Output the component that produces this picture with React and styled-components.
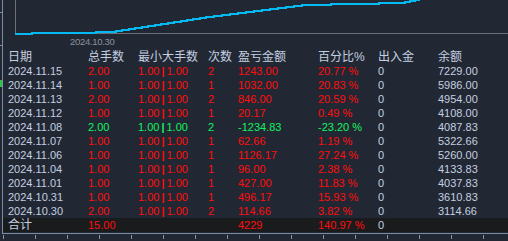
import React from 'react';
import styled, { createGlobalStyle } from 'styled-components';

const GlobalStyle = createGlobalStyle`
    body {
        margin: 0;
        background: #222833;
        font-family: "Liberation Sans", "Noto Sans CJK SC", sans-serif;
    }
`

const rows = [
    ['2024.11.15', '2.00', '2', '1243.00', '20.77 %', '7229.00', 'up'],
    ['2024.11.14', '1.00', '1', '1032.00', '20.83 %', '5986.00', 'up'],
    ['2024.11.13', '2.00', '2', '846.00', '20.59 %', '4954.00', 'up'],
    ['2024.11.12', '1.00', '1', '20.17', '0.49 %', '4108.00', 'up'],
    ['2024.11.08', '2.00', '2', '-1234.83', '-23.20 %', '4087.83', 'down'],
    ['2024.11.07', '1.00', '1', '62.66', '1.19 %', '5322.66', 'up'],
    ['2024.11.06', '1.00', '1', '1126.17', '27.24 %', '5260.00', 'up'],
    ['2024.11.04', '1.00', '1', '96.00', '2.38 %', '4133.83', 'up'],
    ['2024.11.01', '1.00', '1', '427.00', '11.83 %', '4037.83', 'up'],
    ['2024.10.31', '1.00', '1', '496.17', '15.93 %', '3610.83', 'up'],
    ['2024.10.30', '2.00', '2', '114.66', '3.82 %', '3114.66', 'up'],
];

const headers = ['日期', '总手数', '最小大手数', '次数', '盈亏金额', '百分比%', '出入金', '余额'];

// equity curve steps: [x where the line drops a pixel, top y]
const steps = [
    [15, 33], [32, 32], [96, 31], [116, 30], [122, 29], [129, 28], [135, 27], [142, 26],
    [148, 25], [155, 24], [161, 23], [168, 22], [174, 21], [181, 20], [187, 19], [193, 18],
    [200, 17], [206, 16], [214, 15], [222, 14], [230, 13], [238, 12], [246, 11], [254, 10],
    [262, 9], [270, 8], [278, 7], [286, 6], [294, 5], [302, 4], [331, 3], [379, 2],
    [405, 1], [410, 0], [415, -1],
];

const curve = steps.reduce((d, [x, y], i) => {
    const cy = y + 1;
    if (i === 0) return `M${x} ${cy}`;
    return `${d} H${x} V${cy}`;
}, '') + ' H420';

const App = () => {
    return (
        <Page>
            <GlobalStyle />
            <Frame>
                <Tick top={12} />
                <Tick top={45} />
                <Marker />
                <Chart viewBox="3 0 505 50" width="505" height="50">
                    <path d="M15.5 0 V33.5 H508" fill="none" stroke="#6c6f76" strokeWidth="1" />
                    <path d={curve} fill="none" stroke="#05b9f2" strokeWidth="2" />
                    <text x="70" y="44.5" fill="#8a929e" fontSize="9.5" fontFamily="Liberation Sans, sans-serif" letterSpacing="-0.3">2024.10.30</text>
                </Chart>
                <Table>
                    <Row>
                        {headers.map(h => <Head key={h}>{h}</Head>)}
                    </Row>
                    {rows.map(([date, lots, count, pnl, pct, bal, dir]) => (
                        <Row key={date}>
                            <Cell>{date}</Cell>
                            <Cell tone={dir}>{lots}</Cell>
                            <Cell tone={dir}>1.00<Sep>|</Sep>1.00</Cell>
                            <Cell tone={dir}>{count}</Cell>
                            <Cell tone={dir}>{pnl}</Cell>
                            <Cell tone={dir}>{pct}</Cell>
                            <Cell>0</Cell>
                            <Cell>{bal}</Cell>
                        </Row>
                    ))}
                    <Row total>
                        <Head>合计</Head>
                        <Cell tone="up">15.00</Cell>
                        <Cell />
                        <Cell />
                        <Cell tone="up">4229</Cell>
                        <Cell tone="up">140.97 %</Cell>
                        <Cell>0</Cell>
                        <Cell />
                    </Row>
                </Table>
            </Frame>
            <Ruler width="508" height="7">
                {Array.from({ length: 16 }, (_, i) => (
                    <line key={i} x1={3.5 + i * 32} x2={3.5 + i * 32} y1="1" y2="5" stroke="#8796a8" strokeWidth="1" />
                ))}
            </Ruler>
        </Page>
    );
}

export default App;

const Page = styled.div`
    width: 508px;
    height: 241px;
    overflow: hidden;
    background: #222833;
`

const Frame = styled.div`
    position: relative;
    margin-left: 2px;
    border-left: 1px solid #7d8ca0;
    border-bottom: 1px solid #7d8ca0;
    padding-bottom: 1px;
`

const Tick = styled.span`
    position: absolute;
    left: -3px;
    top: ${p => p.top}px;
    width: 2px;
    height: 1px;
    background: #7d8ca0;
`

const Marker = styled.span`
    position: absolute;
    left: -3px;
    top: 80px;
    width: 2px;
    height: 7px;
    background: #2fc24a;
`

const Chart = styled.svg`
    display: block;
`

const Table = styled.div`
    display: flex;
    flex-direction: column;
`

const Row = styled.div`
    display: grid;
    grid-template-columns: 80px 50px 70px 30px 80px 60px 60px 1fr;
    height: 14px;
    padding-left: 5px;
    background: ${p => (p.total ? '#1a1b1c' : 'transparent')};
`

const Head = styled.div`
    font-size: 12px;
    line-height: 14px;
    color: #c3cfe0;
    white-space: nowrap;
`

const Cell = styled.div`
    font-size: 11px;
    line-height: 14px;
    white-space: nowrap;
    color: ${p => (p.tone === 'up' ? '#ff0d0d' : p.tone === 'down' ? '#14f060' : '#c3cfe0')};
`

const Sep = styled.span`
    font-weight: bold;
    margin: 0 2px;
`

const Ruler = styled.svg`
    display: block;
`
